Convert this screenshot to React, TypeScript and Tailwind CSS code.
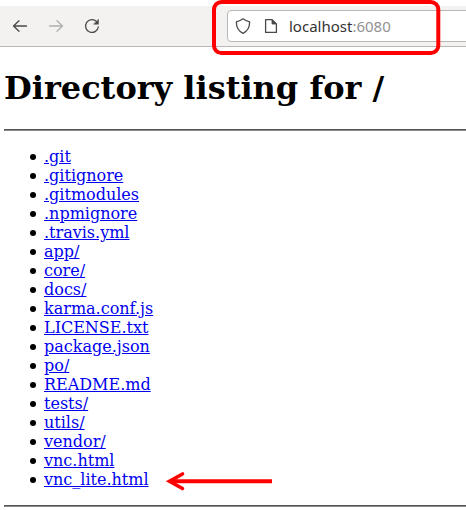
const files = ['.git','.gitignore','.gitmodules','.npmignore','.travis.yml','app/','core/','docs/','karma.conf.js','LICENSE.txt','package.json','po/','README.md','tests/','utils/','vendor/','vnc.html','vnc_lite.html'];

function Toolbar() {
  return (
    <div className="mt-[6px] flex h-[41px] items-center border-b border-[#b9b8b6] bg-[#f3f2f1]">
      <svg className="ml-[12px] h-4 w-4 shrink-0" viewBox="0 0 16 16" fill="none" stroke="#4a4a4a" strokeWidth="1.3" strokeLinecap="round" strokeLinejoin="round">
        <path d="M14.500 8H1.500M7 2.700L1.500 8L7 13.300" />
      </svg>
      <svg className="ml-[20px] h-4 w-4 shrink-0" viewBox="0 0 16 16" fill="none" stroke="#b0b0af" strokeWidth="1.3" strokeLinecap="round" strokeLinejoin="round">
        <path d="M1.500 8H14.500M9 2.700L14.500 8L9 13.300" />
      </svg>
      <svg className="ml-[20px] h-4 w-4 shrink-0" viewBox="0 0 16 16" fill="none" stroke="#4a4a4a" strokeWidth="1.3" strokeLinecap="round" strokeLinejoin="round">
        <path d="M14.300 9A6.400 6.400 0 1 1 12.600 3.600" />
        <path d="M14.500 1.500V6.200H9.800Z" fill="#4a4a4a" strokeWidth="0.5" />
      </svg>
      <div className="ml-[127px] flex h-[32px] w-[260px] shrink-0 items-center rounded border border-[#b9b8b6] bg-white">
        <svg className="ml-[7px] h-4 w-4 shrink-0" viewBox="0 0 16 16" fill="none" stroke="#4a4a4a" strokeWidth="1.3" strokeLinejoin="round">
          <path d="M8 0.800Q10.500 2.800 14.600 3.800C14.800 9 12.500 13 8 15.300C3.500 13 1.200 9 1.400 3.800Q5.500 2.800 8 0.800Z" />
        </svg>
        <svg className="ml-[12px] h-4 w-4 shrink-0" viewBox="0 0 16 16" fill="none" stroke="#4a4a4a" strokeWidth="1.3" strokeLinejoin="round">
          <path d="M2.600 1.700H9L13.400 6V14.400H2.600Z" />
          <path d="M9 1.700V6H13.400Z" fill="#4a4a4a" strokeWidth="0.8" />
        </svg>
        <span className="ml-[10px] font-['Noto_Sans',sans-serif] text-[15px] text-[#333]">localhost<span className="text-[#929292]">:6080</span></span>
      </div>
    </div>
  );
}

function Rule({ className }: { className: string }) {
  return <hr className={`h-[2px] border-t border-b border-t-[#555] border-b-[#888] ${className}`} />;
}

export default function App() {
  return (
    <div className="relative h-[510px] w-[466px] overflow-hidden bg-white font-['DejaVu_Serif',serif] text-black">
      <Toolbar />
      <main className="pl-[4px]">
        <h1 className="mt-[22px] text-[32px] leading-[38px] font-bold whitespace-nowrap">Directory listing for /</h1>
        <Rule className="mt-[22px]" />
        <ul className="mt-[16px] pl-[26px] text-[16px] leading-[19px]">
          {files.map((f) => (
            <li key={f} className="flex items-center">
              <span className="mt-px mr-2 h-[6px] w-[6px] rounded-full bg-black" />
              <a href="#" className="text-[#0000ee] underline">{f}</a>
            </li>
          ))}
        </ul>
        <Rule className="mt-[16px]" />
      </main>
      <svg className="pointer-events-none absolute inset-0" width="466" height="510" fill="none" stroke="#f00">
        <rect x="214" y="2" width="224.300" height="51" rx="7.500" strokeWidth="4" />
        <path d="M272 481.300H171" strokeWidth="4" />
        <path d="M182.500 474L169.500 481.300L182.500 488.500" strokeWidth="3.600" strokeLinecap="round" strokeLinejoin="miter" />
      </svg>
    </div>
  );
}
